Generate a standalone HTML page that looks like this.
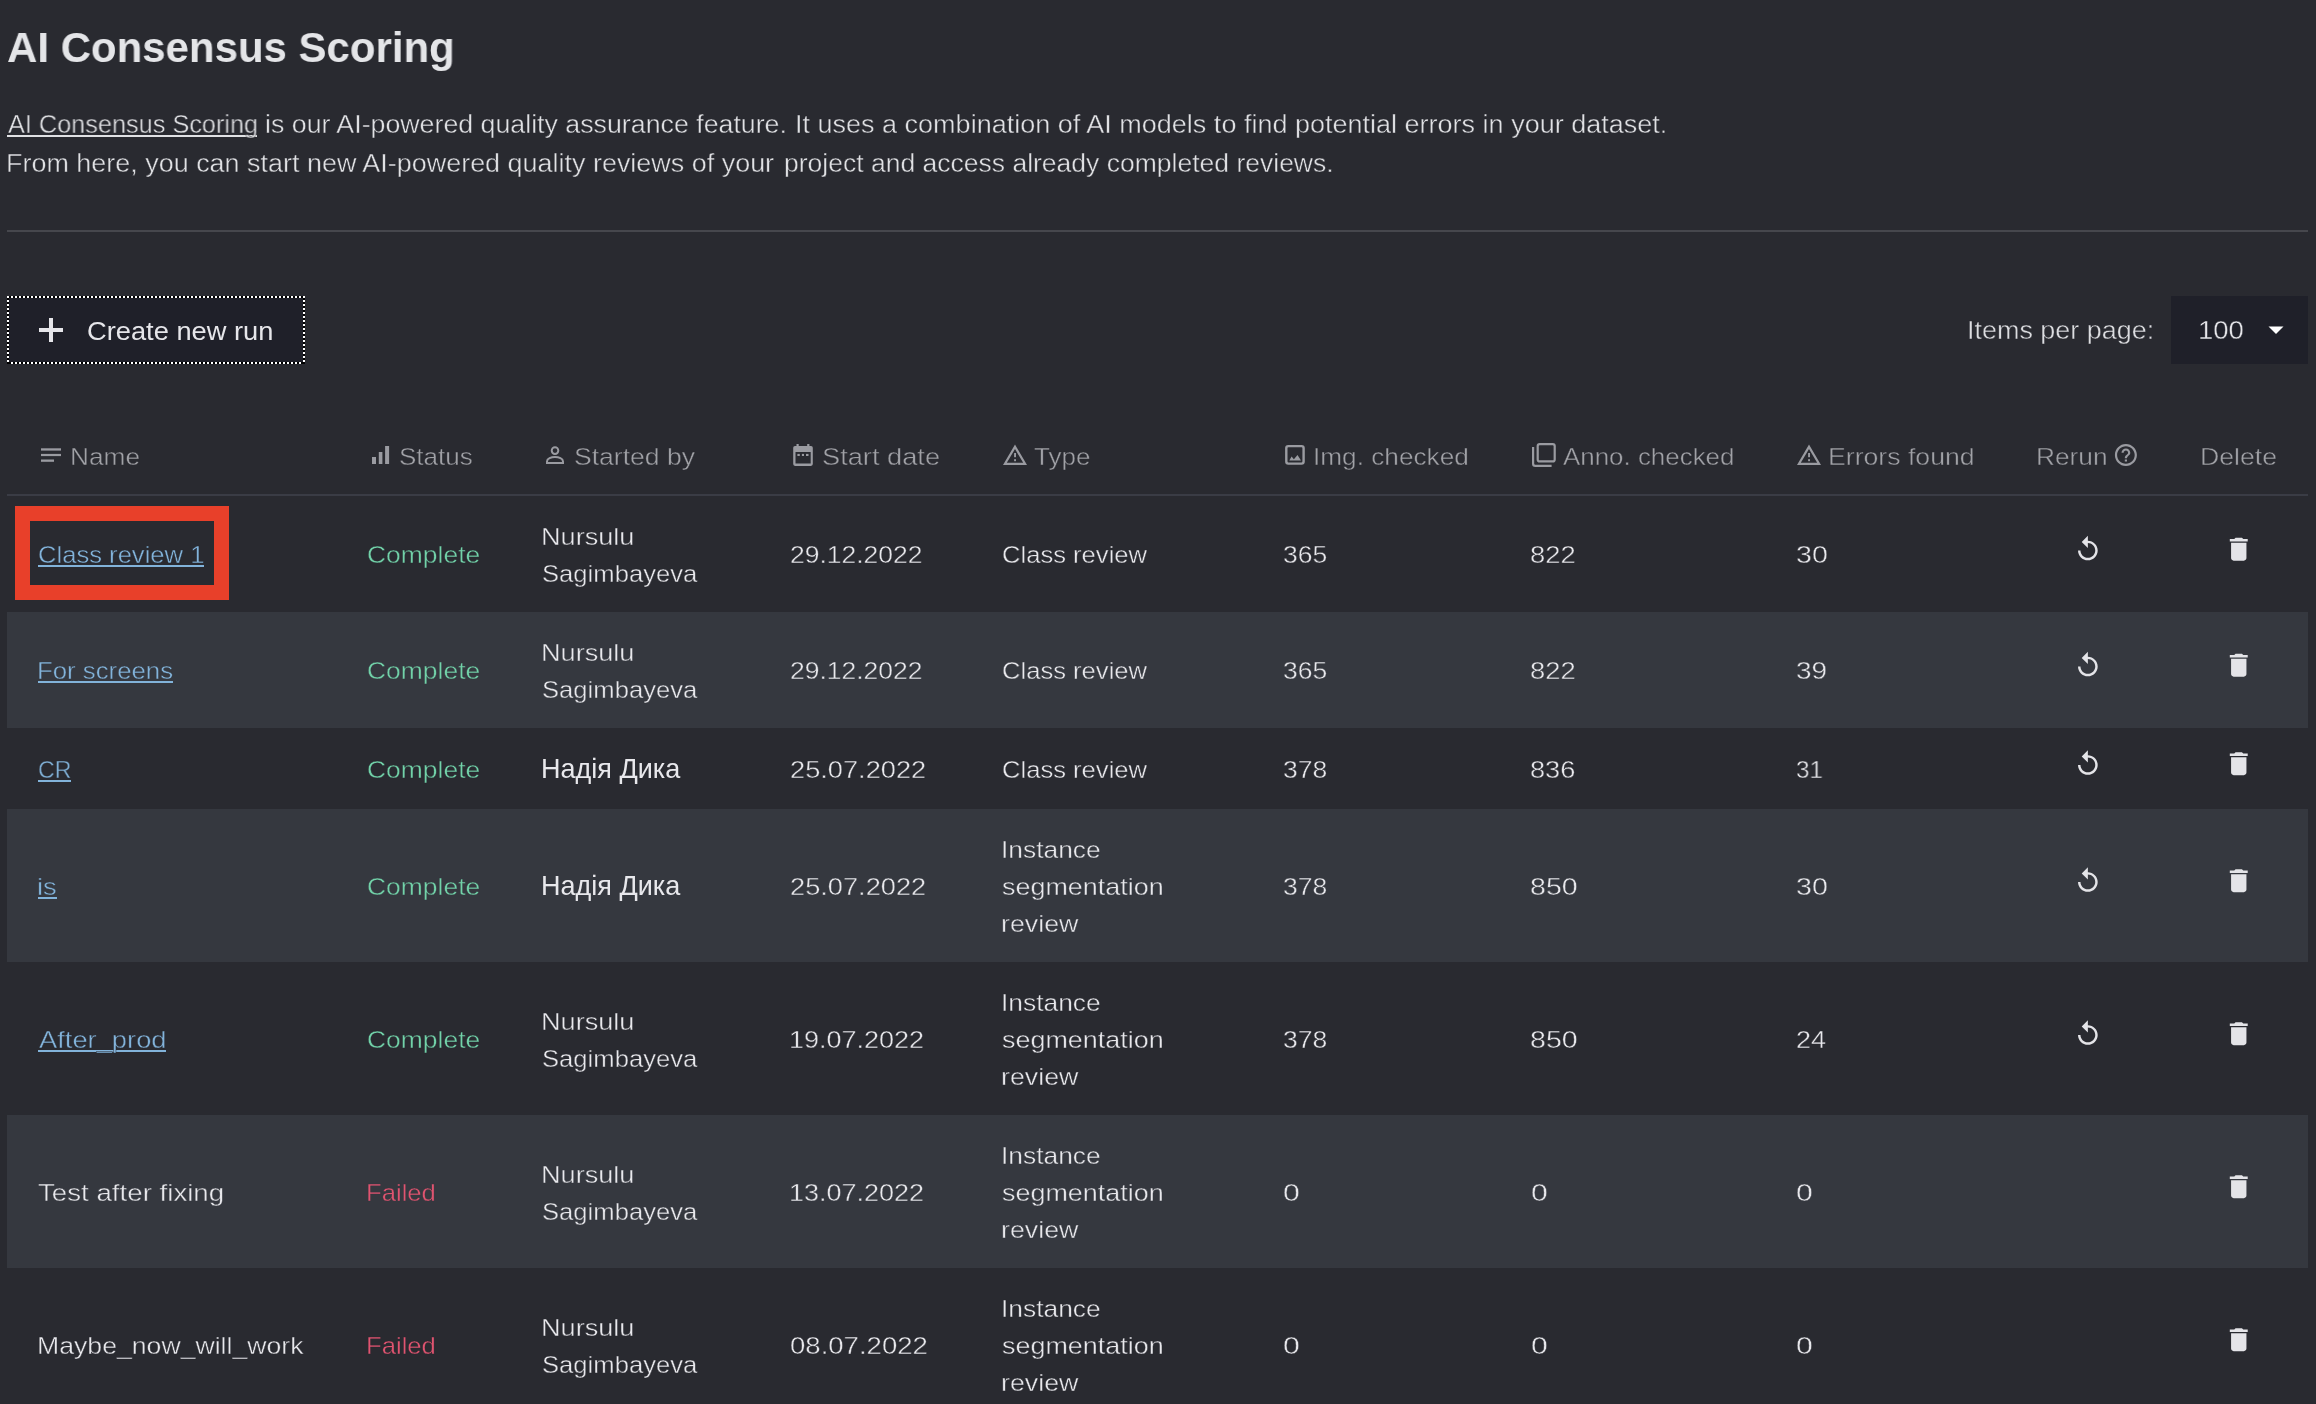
<!DOCTYPE html>
<html><head><meta charset="utf-8"><style>
html,body{margin:0;padding:0;}
body{width:2316px;height:1404px;overflow:hidden;background:#292a30;position:relative;font-family:"Liberation Sans",sans-serif;}
.t{position:absolute;white-space:pre;transform-origin:0 0;will-change:transform;}
.a{position:absolute;}
</style></head><body>
<div class="a" style="left:7px;top:612px;width:2301px;height:116px;background:#35383f"></div>
<div class="a" style="left:7px;top:809px;width:2301px;height:153px;background:#35383f"></div>
<div class="a" style="left:7px;top:1115px;width:2301px;height:153px;background:#35383f"></div>
<div class="a" style="left:7px;top:135px;width:250px;height:2px;background:#e0e1e4"></div>
<div class="a" style="left:7px;top:230px;width:2301px;height:2px;background:#46474d"></div>
<div class="a" style="left:7px;top:494px;width:2301px;height:2px;background:#3a3c45"></div>
<div class="a" style="left:7px;top:296px;width:298px;height:68px;background:#1f2029"></div>
<div class="a" style="left:7px;top:296px;width:298px;height:2px;background:repeating-linear-gradient(90deg,#fff 0 2px,#000 2px 4px)"></div>
<div class="a" style="left:7px;top:362px;width:298px;height:2px;background:repeating-linear-gradient(90deg,#fff 0 2px,#000 2px 4px)"></div>
<div class="a" style="left:7px;top:296px;width:2px;height:68px;background:repeating-linear-gradient(180deg,#fff 0 2px,#000 2px 4px)"></div>
<div class="a" style="left:303px;top:296px;width:2px;height:68px;background:repeating-linear-gradient(180deg,#fff 0 2px,#000 2px 4px)"></div>
<div class="a" style="left:49.2px;top:318px;width:3.6px;height:24px;background:#e6e6ea"></div>
<div class="a" style="left:39px;top:328.2px;width:24px;height:3.6px;background:#e6e6ea"></div>
<div class="a" style="left:2171px;top:296px;width:137px;height:68px;background:#1f2029"></div>
<div class="a" style="left:15px;top:506px;width:184px;height:64px;border:15px solid #e8402a"></div>
<svg class="a" style="left:0;top:0" width="2316" height="1404" viewBox="0 0 2316 1404"><path d="M2268.5 326.5h15l-7.5 7.5z" fill="#ffffff"/><g fill="#9a9ba1"><rect x="41" y="448.3" width="20" height="2.3"/><rect x="41" y="453.9" width="20" height="2.2"/><rect x="41" y="459.5" width="13" height="2.3"/></g><g fill="#9a9ba1"><rect x="372" y="457" width="4" height="7"/><rect x="378.8" y="452" width="3.6" height="12"/><rect x="385.1" y="446" width="4" height="18"/></g><g fill="none" stroke="#9a9ba1" stroke-width="2"><circle cx="555" cy="450.6" r="3.3"/><path d="M547 463h16v-1.6c0-2.8-4.2-4.4-8-4.4s-8 1.6-8 4.4z"/></g><g fill="#9a9ba1"><path d="M795.5 446h15.5a1.8 1.8 0 0 1 1.8 1.8v16.3a1.8 1.8 0 0 1-1.8 1.8h-16a1.8 1.8 0 0 1-1.8-1.8v-16.3a1.8 1.8 0 0 1 1.8-1.8zM795.5 452v11.6h15.2v-11.6z" fill-rule="evenodd"/><rect x="796.5" y="444" width="2.2" height="3"/><rect x="807.2" y="444" width="2.2" height="3"/><rect x="797.4" y="453.9" width="2.4" height="2.1"/><rect x="801.9" y="453.9" width="2.1" height="2.1"/><rect x="806" y="453.9" width="2.5" height="2.1"/></g><g fill="#9a9ba1"><path d="M1015 444.6L1003 465h24z M1015 449L1006.8 462.8h16.4z" fill-rule="evenodd"/><rect x="1014.1" y="453" width="1.9" height="4.2"/><rect x="1014.1" y="459.2" width="1.9" height="2"/></g><g fill="#9a9ba1"><path d="M1809 444.6L1797 465h24z M1809 449L1800.8 462.8h16.4z" fill-rule="evenodd"/><rect x="1808.1" y="453" width="1.9" height="4.2"/><rect x="1808.1" y="459.2" width="1.9" height="2"/></g><g><rect x="1286.3" y="446.1" width="17.3" height="17.5" rx="2" fill="none" stroke="#9a9ba1" stroke-width="2.4"/><path d="M1289.3 460.5l2.3-4 2.3 2.7 3.6-4.3 3.5 5.6z" fill="#9a9ba1"/></g><g fill="none" stroke="#9a9ba1" stroke-width="2.2"><rect x="1537.7" y="444.1" width="17" height="17.3" rx="2"/><path d="M1533.1 447.1v16.6a2.2 2.2 0 0 0 2.2 2.2h16.3"/></g><g transform="translate(2112.7 441.8) scale(1.1)" fill="#9a9ba1"><path d="M11 18h2v-2h-2v2zm1-16C6.48 2 2 6.48 2 12s4.48 10 10 10 10-4.48 10-10S17.52 2 12 2zm0 18c-4.41 0-8-3.59-8-8s3.59-8 8-8 8 3.59 8 8-3.59 8-8 8zm0-14c-2.21 0-4 1.790-4 4h2c0-1.1.9-2 2-2s2 .9 2 2c0 2-3 1.75-3 5h2c0-2.25 3-2.5 3-5 0-2.21-1.79-4-4-4z"/></g><g transform="translate(2073.1 534.5) scale(1.23)" fill="#e4e4e8"><path d="M12 5V1L7 6l5 5V7c3.31 0 6 2.69 6 6s-2.69 6-6 6-6-2.690-6-6H4c0 4.42 3.58 8 8 8s8-3.58 8-8-3.58-8-8-8z"/></g><g transform="translate(2223.4 533.8) scale(1.28)" fill="#e4e4e8"><path d="M6 19c0 1.1.9 2 2 2h8c1.1 0 2-.9 2-2V7H6v12zM19 4h-3.5l-1-1h-5l-1 1H5v2h14V4z"/></g><g transform="translate(2073.1 650.5) scale(1.23)" fill="#e4e4e8"><path d="M12 5V1L7 6l5 5V7c3.31 0 6 2.69 6 6s-2.69 6-6 6-6-2.690-6-6H4c0 4.42 3.58 8 8 8s8-3.58 8-8-3.58-8-8-8z"/></g><g transform="translate(2223.4 649.8) scale(1.28)" fill="#e4e4e8"><path d="M6 19c0 1.1.9 2 2 2h8c1.1 0 2-.9 2-2V7H6v12zM19 4h-3.5l-1-1h-5l-1 1H5v2h14V4z"/></g><g transform="translate(2073.1 749.0) scale(1.23)" fill="#e4e4e8"><path d="M12 5V1L7 6l5 5V7c3.31 0 6 2.69 6 6s-2.69 6-6 6-6-2.690-6-6H4c0 4.42 3.58 8 8 8s8-3.58 8-8-3.58-8-8-8z"/></g><g transform="translate(2223.4 748.3) scale(1.28)" fill="#e4e4e8"><path d="M6 19c0 1.1.9 2 2 2h8c1.1 0 2-.9 2-2V7H6v12zM19 4h-3.5l-1-1h-5l-1 1H5v2h14V4z"/></g><g transform="translate(2073.1 866.0) scale(1.23)" fill="#e4e4e8"><path d="M12 5V1L7 6l5 5V7c3.31 0 6 2.69 6 6s-2.69 6-6 6-6-2.690-6-6H4c0 4.42 3.58 8 8 8s8-3.58 8-8-3.58-8-8-8z"/></g><g transform="translate(2223.4 865.3) scale(1.28)" fill="#e4e4e8"><path d="M6 19c0 1.1.9 2 2 2h8c1.1 0 2-.9 2-2V7H6v12zM19 4h-3.5l-1-1h-5l-1 1H5v2h14V4z"/></g><g transform="translate(2073.1 1019.0) scale(1.23)" fill="#e4e4e8"><path d="M12 5V1L7 6l5 5V7c3.31 0 6 2.69 6 6s-2.69 6-6 6-6-2.690-6-6H4c0 4.42 3.58 8 8 8s8-3.58 8-8-3.58-8-8-8z"/></g><g transform="translate(2223.4 1018.3) scale(1.28)" fill="#e4e4e8"><path d="M6 19c0 1.1.9 2 2 2h8c1.1 0 2-.9 2-2V7H6v12zM19 4h-3.5l-1-1h-5l-1 1H5v2h14V4z"/></g><g transform="translate(2223.4 1171.3) scale(1.28)" fill="#e4e4e8"><path d="M6 19c0 1.1.9 2 2 2h8c1.1 0 2-.9 2-2V7H6v12zM19 4h-3.5l-1-1h-5l-1 1H5v2h14V4z"/></g><g transform="translate(2223.4 1324.3) scale(1.28)" fill="#e4e4e8"><path d="M6 19c0 1.1.9 2 2 2h8c1.1 0 2-.9 2-2V7H6v12zM19 4h-3.5l-1-1h-5l-1 1H5v2h14V4z"/></g></svg>
<span class="t" style="left:7.16px;top:26.26px;font-size:43.17px;line-height:43.17px;color:#e4e5e8;font-weight:bold;transform:scaleX(0.9725);">AI Consensus Scoring</span><span class="t" style="left:8.00px;top:112.47px;font-size:25.44px;line-height:25.44px;color:#e0e1e4;-webkit-text-stroke:0.4px #292a30;transform:scaleX(0.9935);">AI Consensus Scoring</span><span class="t" style="left:265.40px;top:112.47px;font-size:25.44px;line-height:25.44px;color:#e0e1e4;-webkit-text-stroke:0.4px #292a30;transform:scaleX(1.0516);">is our AI-powered quality assurance feature.</span><span class="t" style="left:795.17px;top:112.47px;font-size:25.44px;line-height:25.44px;color:#e0e1e4;-webkit-text-stroke:0.4px #292a30;transform:scaleX(1.0618);">It uses a combination of AI models to find potential errors in your dataset.</span><span class="t" style="left:5.85px;top:151.47px;font-size:25.44px;line-height:25.44px;color:#e0e1e4;-webkit-text-stroke:0.4px #292a30;transform:scaleX(1.0590);">From here, you can start new AI-powered quality reviews of your</span><span class="t" style="left:784.41px;top:151.47px;font-size:25.44px;line-height:25.44px;color:#e0e1e4;-webkit-text-stroke:0.4px #292a30;transform:scaleX(1.0422);">project and access already completed reviews.</span><span class="t" style="left:86.64px;top:318.25px;font-size:26.16px;line-height:26.16px;color:#e6e6ea;font-weight:500;transform:scaleX(1.0420);">Create new run</span><span class="t" style="left:1966.57px;top:318.22px;font-size:25.73px;line-height:25.73px;color:#dcdde0;-webkit-text-stroke:0.4px #292a30;transform:scaleX(1.0478);">Items per page:</span><span class="t" style="left:2198.07px;top:318.47px;font-size:25.44px;line-height:25.44px;color:#e6e6ea;-webkit-text-stroke:0.4px #1f2029;transform:scaleX(1.0821);">100</span><span class="t" style="left:69.90px;top:445.08px;font-size:24.71px;line-height:24.71px;color:#a0a1a6;-webkit-text-stroke:0.4px #292a30;transform:scaleX(1.0628);">Name</span><span class="t" style="left:398.96px;top:445.08px;font-size:24.71px;line-height:24.71px;color:#a0a1a6;-webkit-text-stroke:0.4px #292a30;transform:scaleX(1.0539);">Status</span><span class="t" style="left:573.94px;top:445.08px;font-size:24.71px;line-height:24.71px;color:#a0a1a6;-webkit-text-stroke:0.4px #292a30;transform:scaleX(1.0749);">Started by</span><span class="t" style="left:821.91px;top:445.08px;font-size:24.71px;line-height:24.71px;color:#a0a1a6;-webkit-text-stroke:0.4px #292a30;transform:scaleX(1.1021);">Start date</span><span class="t" style="left:1034.48px;top:445.08px;font-size:24.71px;line-height:24.71px;color:#a0a1a6;-webkit-text-stroke:0.4px #292a30;transform:scaleX(1.0540);">Type</span><span class="t" style="left:1312.64px;top:445.08px;font-size:24.71px;line-height:24.71px;color:#a0a1a6;-webkit-text-stroke:0.4px #292a30;transform:scaleX(1.0604);">Img. checked</span><span class="t" style="left:1563.00px;top:445.08px;font-size:24.71px;line-height:24.71px;color:#a0a1a6;-webkit-text-stroke:0.4px #292a30;transform:scaleX(1.0488);">Anno. checked</span><span class="t" style="left:1827.87px;top:445.08px;font-size:24.71px;line-height:24.71px;color:#a0a1a6;-webkit-text-stroke:0.4px #292a30;transform:scaleX(1.0785);">Errors found</span><span class="t" style="left:2035.90px;top:445.08px;font-size:24.71px;line-height:24.71px;color:#a0a1a6;-webkit-text-stroke:0.4px #292a30;transform:scaleX(1.0636);">Rerun</span><span class="t" style="left:2199.87px;top:445.08px;font-size:24.71px;line-height:24.71px;color:#a0a1a6;-webkit-text-stroke:0.4px #292a30;transform:scaleX(1.0794);">Delete</span><div class="a" style="left:38.0px;top:565.0px;width:166.0px;height:2px;background:#82b3da"></div><span class="t" style="left:37.72px;top:543.08px;font-size:24.71px;line-height:24.71px;color:#82b3da;-webkit-text-stroke:0.4px #292a30;transform:scaleX(1.0361);">Class review 1</span><span class="t" style="left:366.68px;top:543.08px;font-size:24.71px;line-height:24.71px;color:#72d2a9;-webkit-text-stroke:0.4px #292a30;transform:scaleX(1.0712);">Complete</span><span class="t" style="left:540.83px;top:524.58px;font-size:24.71px;line-height:24.71px;color:#e8e8ec;-webkit-text-stroke:0.4px #292a30;transform:scaleX(1.0977);">Nursulu</span><span class="t" style="left:541.97px;top:561.58px;font-size:24.71px;line-height:24.71px;color:#e8e8ec;-webkit-text-stroke:0.4px #292a30;transform:scaleX(1.0375);">Sagimbayeva</span><span class="t" style="left:789.68px;top:543.08px;font-size:24.71px;line-height:24.71px;color:#e8e8ec;-webkit-text-stroke:0.4px #292a30;transform:scaleX(1.0718);">29.12.2022</span><span class="t" style="left:1001.72px;top:543.08px;font-size:24.71px;line-height:24.71px;color:#e8e8ec;-webkit-text-stroke:0.4px #292a30;transform:scaleX(1.0359);">Class review</span><span class="t" style="left:1282.70px;top:543.08px;font-size:24.71px;line-height:24.71px;color:#e8e8ec;-webkit-text-stroke:0.4px #292a30;transform:scaleX(1.0735);">365</span><span class="t" style="left:1530.41px;top:543.08px;font-size:24.71px;line-height:24.71px;color:#e8e8ec;-webkit-text-stroke:0.4px #292a30;transform:scaleX(1.1075);">822</span><span class="t" style="left:1796.14px;top:543.08px;font-size:24.71px;line-height:24.71px;color:#e8e8ec;-webkit-text-stroke:0.4px #292a30;transform:scaleX(1.1606);">30</span><div class="a" style="left:38.0px;top:681.0px;width:135.3px;height:2px;background:#82b3da"></div><span class="t" style="left:36.94px;top:659.08px;font-size:24.71px;line-height:24.71px;color:#82b3da;-webkit-text-stroke:0.4px #35383f;transform:scaleX(1.0436);">For screens</span><span class="t" style="left:366.68px;top:659.08px;font-size:24.71px;line-height:24.71px;color:#72d2a9;-webkit-text-stroke:0.4px #35383f;transform:scaleX(1.0712);">Complete</span><span class="t" style="left:540.83px;top:640.58px;font-size:24.71px;line-height:24.71px;color:#e8e8ec;-webkit-text-stroke:0.4px #35383f;transform:scaleX(1.0977);">Nursulu</span><span class="t" style="left:541.97px;top:677.58px;font-size:24.71px;line-height:24.71px;color:#e8e8ec;-webkit-text-stroke:0.4px #35383f;transform:scaleX(1.0375);">Sagimbayeva</span><span class="t" style="left:789.68px;top:659.08px;font-size:24.71px;line-height:24.71px;color:#e8e8ec;-webkit-text-stroke:0.4px #35383f;transform:scaleX(1.0718);">29.12.2022</span><span class="t" style="left:1001.72px;top:659.08px;font-size:24.71px;line-height:24.71px;color:#e8e8ec;-webkit-text-stroke:0.4px #35383f;transform:scaleX(1.0359);">Class review</span><span class="t" style="left:1282.70px;top:659.08px;font-size:24.71px;line-height:24.71px;color:#e8e8ec;-webkit-text-stroke:0.4px #35383f;transform:scaleX(1.0735);">365</span><span class="t" style="left:1530.41px;top:659.08px;font-size:24.71px;line-height:24.71px;color:#e8e8ec;-webkit-text-stroke:0.4px #35383f;transform:scaleX(1.1075);">822</span><span class="t" style="left:1796.16px;top:659.08px;font-size:24.71px;line-height:24.71px;color:#e8e8ec;-webkit-text-stroke:0.4px #35383f;transform:scaleX(1.1327);">39</span><div class="a" style="left:38.0px;top:780.0px;width:33.4px;height:2px;background:#82b3da"></div><span class="t" style="left:37.84px;top:758.08px;font-size:24.71px;line-height:24.71px;color:#82b3da;-webkit-text-stroke:0.4px #292a30;transform:scaleX(0.9398);">CR</span><span class="t" style="left:366.68px;top:758.08px;font-size:24.71px;line-height:24.71px;color:#72d2a9;-webkit-text-stroke:0.4px #292a30;transform:scaleX(1.0712);">Complete</span><span class="t" style="left:540.84px;top:756.24px;font-size:26.89px;line-height:26.89px;color:#e8e8ec;font-weight:400;transform:scaleX(1.0047);">Надія Дика</span><span class="t" style="left:789.64px;top:758.08px;font-size:24.71px;line-height:24.71px;color:#e8e8ec;-webkit-text-stroke:0.4px #292a30;transform:scaleX(1.1015);">25.07.2022</span><span class="t" style="left:1001.72px;top:758.08px;font-size:24.71px;line-height:24.71px;color:#e8e8ec;-webkit-text-stroke:0.4px #292a30;transform:scaleX(1.0359);">Class review</span><span class="t" style="left:1282.70px;top:758.08px;font-size:24.71px;line-height:24.71px;color:#e8e8ec;-webkit-text-stroke:0.4px #292a30;transform:scaleX(1.0735);">378</span><span class="t" style="left:1530.41px;top:758.08px;font-size:24.71px;line-height:24.71px;color:#e8e8ec;-webkit-text-stroke:0.4px #292a30;transform:scaleX(1.1005);">836</span><span class="t" style="left:1796.28px;top:758.08px;font-size:24.71px;line-height:24.71px;color:#e8e8ec;-webkit-text-stroke:0.4px #292a30;transform:scaleX(0.9765);">31</span><div class="a" style="left:38.0px;top:897.0px;width:19.3px;height:2px;background:#82b3da"></div><span class="t" style="left:37.36px;top:875.08px;font-size:24.71px;line-height:24.71px;color:#82b3da;-webkit-text-stroke:0.4px #35383f;transform:scaleX(1.1075);">is</span><span class="t" style="left:366.68px;top:875.08px;font-size:24.71px;line-height:24.71px;color:#72d2a9;-webkit-text-stroke:0.4px #35383f;transform:scaleX(1.0712);">Complete</span><span class="t" style="left:540.84px;top:873.24px;font-size:26.89px;line-height:26.89px;color:#e8e8ec;font-weight:400;transform:scaleX(1.0047);">Надія Дика</span><span class="t" style="left:789.64px;top:875.08px;font-size:24.71px;line-height:24.71px;color:#e8e8ec;-webkit-text-stroke:0.4px #35383f;transform:scaleX(1.1015);">25.07.2022</span><span class="t" style="left:1000.63px;top:838.08px;font-size:24.71px;line-height:24.71px;color:#e8e8ec;-webkit-text-stroke:0.4px #35383f;transform:scaleX(1.0677);">Instance</span><span class="t" style="left:1002.46px;top:875.08px;font-size:24.71px;line-height:24.71px;color:#e8e8ec;-webkit-text-stroke:0.4px #35383f;transform:scaleX(1.0896);">segmentation</span><span class="t" style="left:1001.39px;top:912.08px;font-size:24.71px;line-height:24.71px;color:#e8e8ec;-webkit-text-stroke:0.4px #35383f;transform:scaleX(1.0840);">review</span><span class="t" style="left:1282.70px;top:875.08px;font-size:24.71px;line-height:24.71px;color:#e8e8ec;-webkit-text-stroke:0.4px #35383f;transform:scaleX(1.0735);">378</span><span class="t" style="left:1530.36px;top:875.08px;font-size:24.71px;line-height:24.71px;color:#e8e8ec;-webkit-text-stroke:0.4px #35383f;transform:scaleX(1.1564);">850</span><span class="t" style="left:1796.14px;top:875.08px;font-size:24.71px;line-height:24.71px;color:#e8e8ec;-webkit-text-stroke:0.4px #35383f;transform:scaleX(1.1606);">30</span><div class="a" style="left:38.0px;top:1050.0px;width:128.0px;height:2px;background:#82b3da"></div><span class="t" style="left:39.00px;top:1028.08px;font-size:24.71px;line-height:24.71px;color:#82b3da;-webkit-text-stroke:0.4px #292a30;transform:scaleX(1.1054);">After_prod</span><span class="t" style="left:366.68px;top:1028.08px;font-size:24.71px;line-height:24.71px;color:#72d2a9;-webkit-text-stroke:0.4px #292a30;transform:scaleX(1.0712);">Complete</span><span class="t" style="left:540.83px;top:1009.58px;font-size:24.71px;line-height:24.71px;color:#e8e8ec;-webkit-text-stroke:0.4px #292a30;transform:scaleX(1.0977);">Nursulu</span><span class="t" style="left:541.97px;top:1046.58px;font-size:24.71px;line-height:24.71px;color:#e8e8ec;-webkit-text-stroke:0.4px #292a30;transform:scaleX(1.0375);">Sagimbayeva</span><span class="t" style="left:789.11px;top:1028.08px;font-size:24.71px;line-height:24.71px;color:#e8e8ec;-webkit-text-stroke:0.4px #292a30;transform:scaleX(1.0927);">19.07.2022</span><span class="t" style="left:1000.63px;top:991.08px;font-size:24.71px;line-height:24.71px;color:#e8e8ec;-webkit-text-stroke:0.4px #292a30;transform:scaleX(1.0677);">Instance</span><span class="t" style="left:1002.46px;top:1028.08px;font-size:24.71px;line-height:24.71px;color:#e8e8ec;-webkit-text-stroke:0.4px #292a30;transform:scaleX(1.0896);">segmentation</span><span class="t" style="left:1001.39px;top:1065.08px;font-size:24.71px;line-height:24.71px;color:#e8e8ec;-webkit-text-stroke:0.4px #292a30;transform:scaleX(1.0840);">review</span><span class="t" style="left:1282.70px;top:1028.08px;font-size:24.71px;line-height:24.71px;color:#e8e8ec;-webkit-text-stroke:0.4px #292a30;transform:scaleX(1.0735);">378</span><span class="t" style="left:1530.36px;top:1028.08px;font-size:24.71px;line-height:24.71px;color:#e8e8ec;-webkit-text-stroke:0.4px #292a30;transform:scaleX(1.1564);">850</span><span class="t" style="left:1795.65px;top:1028.08px;font-size:24.71px;line-height:24.71px;color:#e8e8ec;-webkit-text-stroke:0.4px #292a30;transform:scaleX(1.0936);">24</span><span class="t" style="left:38.45px;top:1181.08px;font-size:24.71px;line-height:24.71px;color:#e8e8ec;-webkit-text-stroke:0.4px #35383f;transform:scaleX(1.1206);">Test after fixing</span><span class="t" style="left:365.95px;top:1181.08px;font-size:24.71px;line-height:24.71px;color:#e05470;-webkit-text-stroke:0.4px #35383f;transform:scaleX(1.0386);">Failed</span><span class="t" style="left:540.83px;top:1162.58px;font-size:24.71px;line-height:24.71px;color:#e8e8ec;-webkit-text-stroke:0.4px #35383f;transform:scaleX(1.0977);">Nursulu</span><span class="t" style="left:541.97px;top:1199.58px;font-size:24.71px;line-height:24.71px;color:#e8e8ec;-webkit-text-stroke:0.4px #35383f;transform:scaleX(1.0375);">Sagimbayeva</span><span class="t" style="left:789.11px;top:1181.08px;font-size:24.71px;line-height:24.71px;color:#e8e8ec;-webkit-text-stroke:0.4px #35383f;transform:scaleX(1.0927);">13.07.2022</span><span class="t" style="left:1000.63px;top:1144.08px;font-size:24.71px;line-height:24.71px;color:#e8e8ec;-webkit-text-stroke:0.4px #35383f;transform:scaleX(1.0677);">Instance</span><span class="t" style="left:1002.46px;top:1181.08px;font-size:24.71px;line-height:24.71px;color:#e8e8ec;-webkit-text-stroke:0.4px #35383f;transform:scaleX(1.0896);">segmentation</span><span class="t" style="left:1001.39px;top:1218.08px;font-size:24.71px;line-height:24.71px;color:#e8e8ec;-webkit-text-stroke:0.4px #35383f;transform:scaleX(1.0840);">review</span><span class="t" style="left:1282.59px;top:1181.08px;font-size:24.71px;line-height:24.71px;color:#e8e8ec;-webkit-text-stroke:0.4px #35383f;transform:scaleX(1.2224);">0</span><span class="t" style="left:1530.59px;top:1181.08px;font-size:24.71px;line-height:24.71px;color:#e8e8ec;-webkit-text-stroke:0.4px #35383f;transform:scaleX(1.2224);">0</span><span class="t" style="left:1796.09px;top:1181.08px;font-size:24.71px;line-height:24.71px;color:#e8e8ec;-webkit-text-stroke:0.4px #35383f;transform:scaleX(1.2224);">0</span><span class="t" style="left:36.87px;top:1334.08px;font-size:24.71px;line-height:24.71px;color:#e8e8ec;-webkit-text-stroke:0.4px #292a30;transform:scaleX(1.0783);">Maybe_now_will_work</span><span class="t" style="left:365.95px;top:1334.08px;font-size:24.71px;line-height:24.71px;color:#e05470;-webkit-text-stroke:0.4px #292a30;transform:scaleX(1.0386);">Failed</span><span class="t" style="left:540.83px;top:1315.58px;font-size:24.71px;line-height:24.71px;color:#e8e8ec;-webkit-text-stroke:0.4px #292a30;transform:scaleX(1.0977);">Nursulu</span><span class="t" style="left:541.97px;top:1352.58px;font-size:24.71px;line-height:24.71px;color:#e8e8ec;-webkit-text-stroke:0.4px #292a30;transform:scaleX(1.0375);">Sagimbayeva</span><span class="t" style="left:790.17px;top:1334.08px;font-size:24.71px;line-height:24.71px;color:#e8e8ec;-webkit-text-stroke:0.4px #292a30;transform:scaleX(1.1151);">08.07.2022</span><span class="t" style="left:1000.63px;top:1297.08px;font-size:24.71px;line-height:24.71px;color:#e8e8ec;-webkit-text-stroke:0.4px #292a30;transform:scaleX(1.0677);">Instance</span><span class="t" style="left:1002.46px;top:1334.08px;font-size:24.71px;line-height:24.71px;color:#e8e8ec;-webkit-text-stroke:0.4px #292a30;transform:scaleX(1.0896);">segmentation</span><span class="t" style="left:1001.39px;top:1371.08px;font-size:24.71px;line-height:24.71px;color:#e8e8ec;-webkit-text-stroke:0.4px #292a30;transform:scaleX(1.0840);">review</span><span class="t" style="left:1282.59px;top:1334.08px;font-size:24.71px;line-height:24.71px;color:#e8e8ec;-webkit-text-stroke:0.4px #292a30;transform:scaleX(1.2224);">0</span><span class="t" style="left:1530.59px;top:1334.08px;font-size:24.71px;line-height:24.71px;color:#e8e8ec;-webkit-text-stroke:0.4px #292a30;transform:scaleX(1.2224);">0</span><span class="t" style="left:1796.09px;top:1334.08px;font-size:24.71px;line-height:24.71px;color:#e8e8ec;-webkit-text-stroke:0.4px #292a30;transform:scaleX(1.2224);">0</span>
</body></html>
